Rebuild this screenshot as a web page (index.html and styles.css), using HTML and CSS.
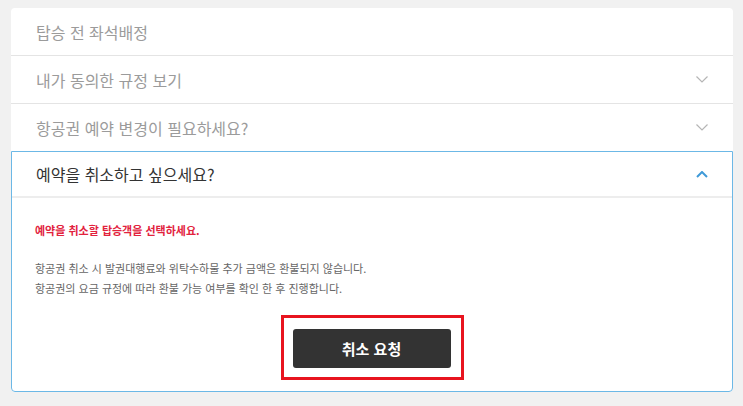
FILE: index.html
```html
<!DOCTYPE html>
<html lang="ko">
<head>
    <meta charset="UTF-8">
    <meta name="viewport" content="width=device-width, initial-scale=1.0">
    <title>예약 취소</title>
    <link rel="stylesheet" href="styles.css">
</head>
<body>

    <div class="card">
        <div class="row">
            <span class="row-title">탑승 전 좌석배정</span>
        </div>
        <div class="row">
            <span class="row-title">내가 동의한 규정 보기</span>
            <svg class="chev" width="12" height="7" viewBox="0 0 12 7"><polyline points="0.5,0.5 6,6 11.5,0.5" fill="none" stroke="#b5b5b5" stroke-width="1.2"/></svg>
        </div>
        <div class="row">
            <span class="row-title">항공권 예약 변경이 필요하세요?</span>
            <svg class="chev" width="12" height="7" viewBox="0 0 12 7"><polyline points="0.5,0.5 6,6 11.5,0.5" fill="none" stroke="#b5b5b5" stroke-width="1.2"/></svg>
        </div>
        <div class="panel">
            <div class="panel-head">
                <span class="panel-title">예약을 취소하고 싶으세요?</span>
                <svg class="chev" width="12" height="7" viewBox="0 0 12 7"><polyline points="1,6 6,1 11,6" fill="none" stroke="#3f9ad8" stroke-width="2"/></svg>
            </div>
            <div class="panel-body">
                <p class="alert">예약을 취소할 탑승객을 선택하세요.</p>
                <p class="notice">항공권 취소 시 발권대행료와 위탁수하물 추가 금액은 환불되지 않습니다.<br>항공권의 요금 규정에 따라 환불 가능 여부를 확인 한 후 진행합니다.</p>
                <div class="actions">
                    <div class="highlight">
                        <button class="cancel-btn">취소 요청</button>
                    </div>
                </div>
            </div>
        </div>
    </div>

</body>
</html>
```

FILE: styles.css
```css
body {
    margin: 0;
    padding: 8px 10px 0 11px;
    background: #f1f1f1;
    font-family: "Noto Sans CJK KR", "Noto Sans", sans-serif;
}
.card {
    background: #fff;
    border-radius: 4px;
}
.row {
    display: flex;
    justify-content: space-between;
    align-items: center;
    height: 47px;
    padding: 0 25px;
    border-bottom: 1px solid #e4e4e4;
}
.row:nth-child(3) {
    border-bottom: none;
}
.row-title {
    font-size: 16px;
    color: #9b9b9b;
}
.chev {
    display: block;
}
.panel {
    border: 1px solid #6cb8e6;
    border-radius: 0 0 4px 4px;
}
.panel-head {
    display: flex;
    justify-content: space-between;
    align-items: center;
    height: 44px;
    padding: 0 24px;
    border-bottom: 2px solid #ededed;
}
.panel-title {
    font-size: 16px;
    color: #333;
}
.panel-body {
    padding: 24px 23px 11px;
}
.alert {
    margin: 0;
    font-size: 11px;
    line-height: 16px;
    font-weight: bold;
    color: #e2223d;
}
.notice {
    margin: 20px 0 0;
    font-size: 11px;
    line-height: 20px;
    color: #666;
}
.actions {
    display: flex;
    justify-content: center;
    margin-top: 17px;
}
.highlight {
    border: 3px solid #e8141f;
    padding: 11px 10px 9px 9px;
}
.cancel-btn {
    display: block;
    width: 158px;
    height: 39px;
    background: #333;
    color: #fff;
    border: none;
    border-radius: 3px;
    font-family: inherit;
    font-size: 15px;
    font-weight: bold;
    cursor: pointer;
}
```
